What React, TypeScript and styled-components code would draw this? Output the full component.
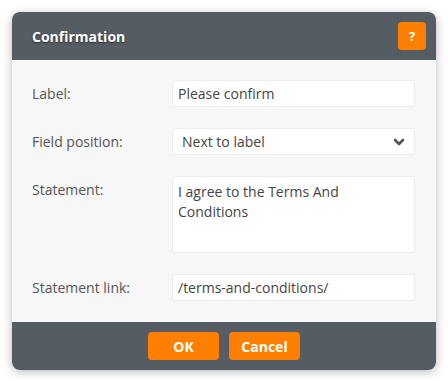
import React from 'react'
import styled, { createGlobalStyle } from 'styled-components'

const GlobalStyle = createGlobalStyle`
  html, body {
    margin: 0;
    padding: 0;
    background: #ffffff;
  }
  body {
    font-family: "Open Sans", "Liberation Sans", sans-serif;
  }
`

const Page = styled.div`
  padding: 12px;
  width: 448px;
  height: 382px;
  box-sizing: border-box;
`

const Dialog = styled.div`
  width: 424px;
  height: 358px;
  border-radius: 8px;
  overflow: hidden;
  display: flex;
  flex-direction: column;
  background: #f7f7f7;
  box-shadow: 0 2px 10px rgba(0, 0, 0, 0.28);
`

const Header = styled.div`
  height: 48px;
  background: #565c64;
  display: flex;
  align-items: center;
  justify-content: space-between;
  padding: 0 10px 0 20px;
  flex-shrink: 0;
`

const Title = styled.div`
  color: #ffffff;
  font-weight: 700;
  font-size: 14px;
  text-shadow: 0 1px 2px rgba(0, 0, 0, 0.5);
`

const HelpButton = styled.button`
  width: 28px;
  height: 28px;
  border: none;
  border-radius: 4px;
  background: #ff7f00;
  color: #ffffff;
  font-family: inherit;
  font-weight: 700;
  font-size: 13px;
  padding: 0;
  cursor: pointer;
`

const Body = styled.div`
  flex: 1;
  padding: 20px 21px 21px 20px;
  display: flex;
  flex-direction: column;
  gap: 21px;
`

const Row = styled.div`
  display: grid;
  grid-template-columns: 140px 1fr;
  align-items: start;
`

const Label = styled.div`
  font-size: 14px;
  color: #555;
  line-height: 27px;
`

const Field = styled.div<{ $pad?: number }>`
  height: 27px;
  box-sizing: border-box;
  background: #ffffff;
  border: 1px solid #ececec;
  border-radius: 3px;
  padding: 0 ${({ $pad }) => $pad ?? 5}px;
  font-size: 14px;
  color: #444;
  line-height: 25px;
  display: flex;
  align-items: center;
  justify-content: space-between;
`

const TextArea = styled.div`
  height: 77px;
  box-sizing: border-box;
  background: #ffffff;
  border: 1px solid #ececec;
  border-radius: 3px;
  padding: 5px 5px 0;
  font-size: 14px;
  color: #444;
  line-height: 20px;
`

const Chevron = styled.svg`
  width: 12px;
  height: 12px;
`

const Footer = styled.div`
  height: 48px;
  background: #565c64;
  display: flex;
  align-items: center;
  justify-content: center;
  gap: 10px;
  flex-shrink: 0;
`

const ActionButton = styled.button`
  width: 71px;
  height: 28px;
  border: none;
  border-radius: 4px;
  background: #ff7f00;
  color: #ffffff;
  font-family: inherit;
  font-weight: 700;
  font-size: 14px;
  padding: 0;
  cursor: pointer;
`

export default function App() {
  return (
    <Page>
      <GlobalStyle />
      <Dialog>
        <Header>
          <Title>Confirmation</Title>
          <HelpButton>?</HelpButton>
        </Header>
        <Body>
          <Row>
            <Label>Label:</Label>
            <Field>Please confirm</Field>
          </Row>
          <Row>
            <Label>Field position:</Label>
            <Field $pad={9}>
              Next to label
              <Chevron viewBox="0 0 12 12">
                <path d="M2 4 L6 8 L10 4" fill="none" stroke="#555" strokeWidth="2.6" strokeLinecap="round" strokeLinejoin="round" />
              </Chevron>
            </Field>
          </Row>
          <Row>
            <Label>Statement:</Label>
            <TextArea>
              I agree to the Terms And
              <br />
              Conditions
            </TextArea>
          </Row>
          <Row>
            <Label>Statement link:</Label>
            <Field>/terms-and-conditions/</Field>
          </Row>
        </Body>
        <Footer>
          <ActionButton>OK</ActionButton>
          <ActionButton>Cancel</ActionButton>
        </Footer>
      </Dialog>
    </Page>
  )
}
